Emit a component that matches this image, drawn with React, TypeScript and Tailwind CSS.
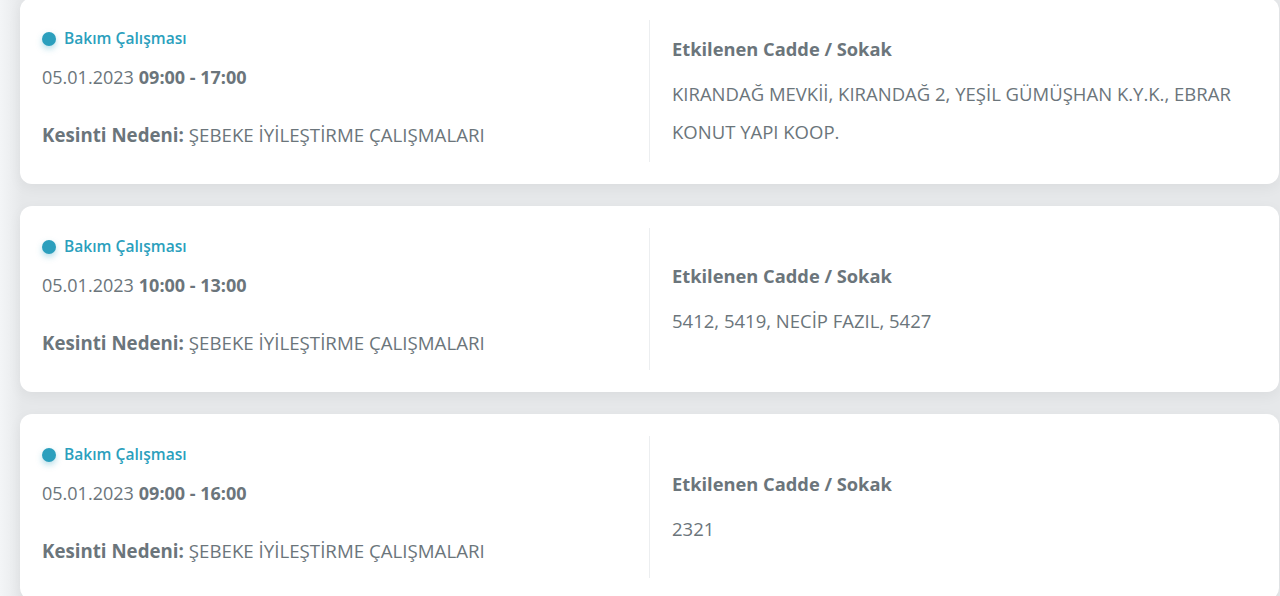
import React from "react";

type Item = { date: string; time: string; reason: string; streets: string };

const items: Item[] = [
  {
    date: "05.01.2023",
    time: "09:00 - 17:00",
    reason: "ŞEBEKE İYİLEŞTİRME ÇALIŞMALARI",
    streets: "KIRANDAĞ MEVKİİ, KIRANDAĞ 2, YEŞİL GÜMÜŞHAN K.Y.K., EBRAR KONUT YAPI KOOP.",
  },
  {
    date: "05.01.2023",
    time: "10:00 - 13:00",
    reason: "ŞEBEKE İYİLEŞTİRME ÇALIŞMALARI",
    streets: "5412, 5419, NECİP FAZIL, 5427",
  },
  {
    date: "05.01.2023",
    time: "09:00 - 16:00",
    reason: "ŞEBEKE İYİLEŞTİRME ÇALIŞMALARI",
    streets: "2321",
  },
];

function Card({ item }: { item: Item }) {
  return (
    <div className="flex h-[186px] shrink-0 rounded-[12px] bg-white py-[22px] shadow-[0_4px_14px_rgba(0,0,0,0.05)]">
      <div className="flex w-[629px] shrink-0 flex-col pl-[22px]">
        <div className="mt-[8px] flex h-[22px] items-center gap-[8px]">
          <span className="h-[14px] w-[14px] rounded-full bg-[#2b9fbd] shadow-[0_3px_6px_rgba(43,159,189,0.35)]" />
          <span className="text-[15.6px] font-semibold text-[#2b9fbd]">Bakım Çalışması</span>
        </div>
        <div className="mt-[16px] flex h-[22px] items-center text-[18px] text-[#6b757b]">
          <span>{item.date}</span>
          <span className="ml-[5px] font-bold">{item.time}</span>
        </div>
        <div className="mt-[36px] flex h-[22px] items-center text-[18.7px] text-[#6b757b]">
          <span className="font-bold">Kesinti Nedeni:</span>
          <span className="ml-[5px]">{item.reason}</span>
        </div>
      </div>
      <div className="flex flex-1 flex-col justify-center border-l border-[#eceef0] pl-[22px] pr-[20px] pt-[6px]">
        <div className="flex h-[24px] items-center text-[18.3px] font-bold text-[#6b757b]">
          Etkilenen Cadde / Sokak
        </div>
        <div className="mt-[14px] text-[18.5px] leading-[38px] text-[#6b757b]">{item.streets}</div>
      </div>
    </div>
  );
}

export default function App() {
  return (
    <div
      className="h-[596px] w-[1280px] overflow-hidden bg-[linear-gradient(to_right,#f3f5f7_0px,#e6e8ea_22px,#e6e8ea_100%)]"
      style={{ fontFamily: '"Open Sans", "Noto Sans", sans-serif' }}
    >
      <div className="-mt-[2px] flex flex-col gap-[22px] pl-[20px] pr-[1px]">
        {items.map((it, i) => (
          <Card key={i} item={it} />
        ))}
      </div>
    </div>
  );
}
